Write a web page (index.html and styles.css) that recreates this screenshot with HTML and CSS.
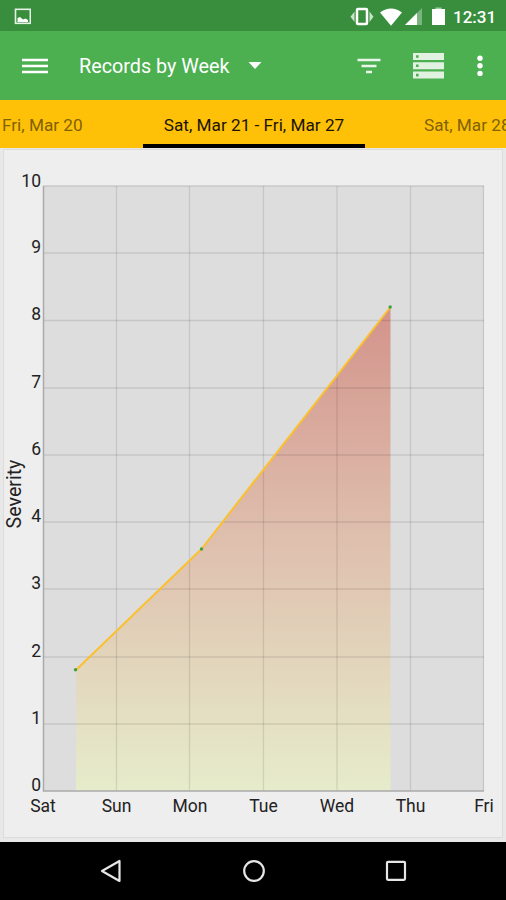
FILE: index.html
```
<!DOCTYPE html>
<html lang="en">
<head>
    <meta charset="UTF-8">
    <meta name="viewport" content="width=device-width, initial-scale=1.0">
    <title>Records by Week</title>
    <link rel="stylesheet" href="styles.css">
</head>
<body>
    <div class="status-bar">
        <svg class="icon-picture" width="18" height="18" viewBox="0 0 18 18">
            <rect x="2.500" y="2.300" width="14.800" height="14" fill="none" stroke="#e4f1e5" stroke-width="1.600"/>
            <path d="M4.500 15v-4l2.500-1 3 2.500 2.500-1L15 13v2z" fill="#fff"/>
        </svg>
        <div class="status-icons">
            <svg width="24" height="20" viewBox="0 0 24 20">
                <rect x="7" y="2" width="10" height="15" rx="1" fill="none" stroke="#fff" stroke-width="2.500"/>
                <path d="M4.500 4.500v10.500L.5 9.800zM19.500 4.500v10.500l4-5.200z" fill="#c9e2cb"/>
            </svg>
            <svg class="icon-wifi" width="22" height="18" viewBox="0 0 22 18">
                <path d="M0 4.500Q11-3.500 22 4.500L11 17.800z" fill="#fff"/>
            </svg>
            <svg class="icon-signal" width="17" height="17" viewBox="0 0 17 17">
                <path d="M0 17L17 0v17z" fill="#7cb47f"/>
                <path d="M0 17L12 5v12z" fill="#fff"/>
            </svg>
            <svg class="icon-battery" width="13" height="19" viewBox="0 0 13 19">
                <path d="M3.500.5h6v2h-6z" fill="#a5cca7"/>
                <path d="M0 2h13v16H0z" fill="#fff"/>
            </svg>
            <span class="clock">12:31</span>
        </div>
    </div>

    <div class="toolbar">
        <svg class="icon-menu" width="26" height="16" viewBox="0 0 26 16">
            <path d="M0 2h26M0 8h26M0 14h26" stroke="#fff" stroke-width="2.400"/>
        </svg>
        <h1>Records by Week</h1>
        <svg class="icon-caret" width="14" height="8" viewBox="0 0 14 8">
            <path d="M.5 0h13L7 7z" fill="#fff"/>
        </svg>
        <div class="actions">
            <svg width="24" height="16" viewBox="0 0 24 16">
                <path d="M.5 2h23M4.500 8h15M9 14h6" stroke="#e8f5e9" stroke-width="2.500"/>
            </svg>
            <svg class="icon-list" width="31" height="26" viewBox="0 0 31 26">
                <path d="M0 0h31v7H0zM0 9.300h31v7H0zM0 18.600h31v7H0z" fill="#e1f2e1"/>
                <path d="M3 2.200h2.600v2.600H3zM3 11.500h2.600v2.600H3zM3 20.800h2.600v2.600H3z" fill="#4caf50"/>
            </svg>
            <svg class="icon-more" width="6" height="22" viewBox="0 0 6 22">
                <circle cx="3" cy="3.200" r="2.700" fill="#fff"/>
                <circle cx="3" cy="10.800" r="2.700" fill="#fff"/>
                <circle cx="3" cy="18.400" r="2.700" fill="#fff"/>
            </svg>
        </div>
    </div>

    <div class="tabs">
        <div class="tab tab-prev">Fri, Mar 20</div>
        <div class="tab active">Sat, Mar 21 - Fri, Mar 27</div>
        <div class="tab tab-next">Sat, Mar 28</div>
    </div>

    <div class="content">
        <div class="card">
            <svg class="chart" width="500" height="687" viewBox="3 149 500 687">
                <defs>
                    <linearGradient id="severity" gradientUnits="userSpaceOnUse" x1="0" y1="307" x2="0" y2="791">
                        <stop offset="0" stop-color="#d3938b"/>
                        <stop offset="0.500" stop-color="#dfc1af"/>
                        <stop offset="1" stop-color="#e6eccb"/>
                    </linearGradient>
                </defs>
                <rect x="43" y="185.500" width="441" height="605.500" fill="#ddd"/>
                <path d="M76 670L201.500 549 390.500 307V791H76z" fill="url(#severity)"/>

                <!-- grid -->
                <path class="grid" d="M43 186H484M43 253H484M43 320.500H484M43 388H484M43 455H484M43 522H484M43 589H484M43 657H484M43 724H484"/>
                <path class="grid" d="M116.500 186V791M189.500 186V791M263.500 186V791M337 186V791M410.500 186V791M483.500 186V791"/>
                <path class="axis" d="M43.500 186V791H484"/>

                <path d="M76 670L201.500 549 390.500 307" fill="none" stroke="#fbc02d" stroke-width="2"/>
                <g fill="#3fa044">
                    <circle cx="75.500" cy="669.700" r="1.700"/>
                    <circle cx="201.500" cy="549" r="1.700"/>
                    <circle cx="390.200" cy="307" r="1.700"/>
                </g>

                <g class="y-labels">
                    <text x="41" y="186.500">10</text>
                    <text x="41" y="252.500">9</text>
                    <text x="41" y="320">8</text>
                    <text x="41" y="387.500">7</text>
                    <text x="41" y="454.500">6</text>
                    <text x="41" y="521.500">4</text>
                    <text x="41" y="588.500">3</text>
                    <text x="41" y="656.500">2</text>
                    <text x="41" y="723.500">1</text>
                    <text x="41" y="790.500">0</text>
                </g>
                <g class="x-labels">
                    <text x="43" y="812">Sat</text>
                    <text x="116.500" y="812">Sun</text>
                    <text x="190" y="812">Mon</text>
                    <text x="263.500" y="812">Tue</text>
                    <text x="337" y="812">Wed</text>
                    <text x="410.500" y="812">Thu</text>
                    <text x="484" y="812">Fri</text>
                </g>
                <text class="axis-title" transform="translate(20.500 494) rotate(-90)">Severity</text>
            </svg>
        </div>
    </div>

    <div class="nav-bar">
        <svg width="24" height="24" viewBox="0 0 24 24">
            <path d="M3 12L20.500 2v20z"/>
        </svg>
        <svg width="24" height="24" viewBox="0 0 24 24">
            <circle cx="12" cy="12" r="9.800"/>
        </svg>
        <svg width="24" height="24" viewBox="0 0 24 24">
            <rect x="3" y="2.800" width="18" height="18" rx="1"/>
        </svg>
    </div>
</body>
</html>
```
FILE: styles.css
```
body {
    font-family: Roboto, "Noto Sans", sans-serif;
    margin: 0;
    width: 506px;
    height: 900px;
    display: flex;
    flex-direction: column;
    overflow: hidden;
    background: #eee;
}

svg {
    display: block;
    flex: none;
}

/* Status bar */
.status-bar {
    height: 31px;
    padding: 0 10px 0 13px;
    box-sizing: border-box;
    display: flex;
    align-items: center;
    justify-content: space-between;
    background: #388e3c;
    color: #fff;
}

.status-icons {
    display: flex;
    align-items: center;
    padding-top: 2px;
}

.icon-wifi {
    margin-left: 6px;
}

.icon-signal {
    margin-left: 3px;
}

.icon-battery {
    margin-left: 10px;
}

.clock {
    width: 43px;
    margin-left: 8px;
    font-size: 17px;
    font-weight: 500;
    white-space: nowrap;
}

/* Toolbar */
.toolbar {
    height: 69px;
    padding: 0 23px 0 22px;
    box-sizing: border-box;
    display: flex;
    align-items: center;
    background: #4caf50;
    color: #fff;
}

.toolbar h1 {
    margin: 2px 0 0 31px;
    width: 152px;
    font-size: 19.8px;
    font-weight: 400;
    white-space: nowrap;
}

.icon-caret {
    margin-left: 17px;
}

.actions {
    display: flex;
    align-items: center;
    margin-left: auto;
}

.icon-list {
    margin-left: 32px;
}

.icon-more {
    margin-left: 33px;
}

/* Week tabs */
.tabs {
    height: 48px;
    display: flex;
    background: #ffc107;
    font-size: 17.2px;
    line-height: 50px;
    white-space: nowrap;
    overflow: hidden;
}

.tab {
    flex: none;
    box-sizing: border-box;
    height: 48px;
    color: #806104;
}

.tab-prev {
    width: 143px;
    padding-left: 2px;
}

.tab.active {
    width: 222px;
    text-align: center;
    color: #1a1401;
    border-bottom: 4px solid #000;
}

.tab-next {
    padding-left: 59px;
}

/* Chart */
.content {
    height: 694px;
    padding: 1px 3px;
    box-sizing: border-box;
    background: #e8e8e8;
}

.card {
    height: 687px;
    background: #eee;
    border: 1px solid #dcdcdc;
}

.chart {
    margin: -1px;
}

.grid {
    fill: none;
    stroke: #000;
    stroke-opacity: 0.1;
    stroke-width: 1.3;
}

.axis {
    fill: none;
    stroke: #aaa;
    stroke-width: 1.5;
}

.chart text {
    fill: #222;
    font-size: 17.5px;
}

.y-labels {
    text-anchor: end;
}

.x-labels,
.chart .axis-title {
    text-anchor: middle;
}

.chart .axis-title {
    font-size: 19.6px;
}

/* Navigation bar */
.nav-bar {
    height: 58px;
    padding: 0 98px 0 99px;
    box-sizing: border-box;
    display: flex;
    align-items: center;
    justify-content: space-between;
    background: #000;
}

.nav-bar svg {
    fill: none;
    stroke: #e6e6e6;
    stroke-width: 2.2;
    stroke-linejoin: round;
}
```
